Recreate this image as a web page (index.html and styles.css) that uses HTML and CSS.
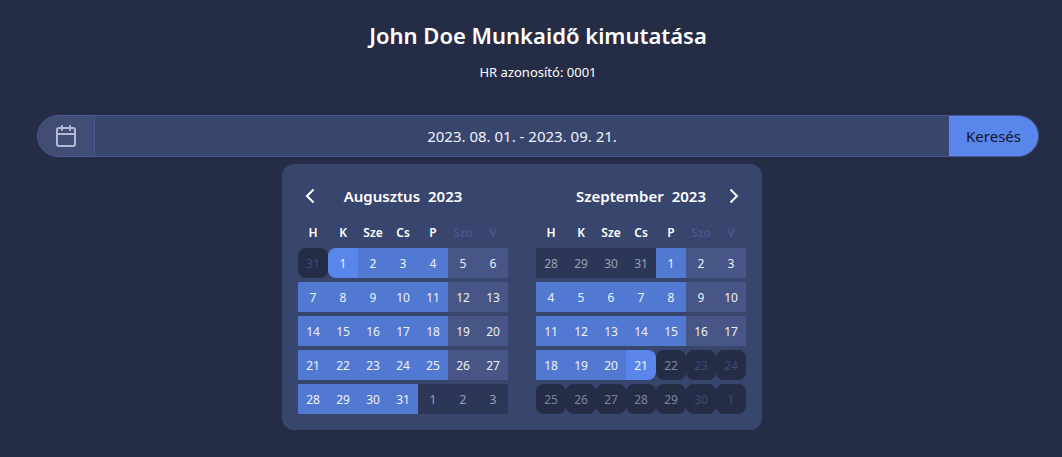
FILE: index.html
```html
<!DOCTYPE html>
<html lang="hu">
<head>
<meta charset="utf-8">
<meta name="viewport" content="width=device-width, initial-scale=1">
<title>Munkaidő kimutatás</title>
<link rel="stylesheet" href="styles.css">
</head>
<body>
<main class="page">
  <h1 class="title">John Doe Munkaidő kimutatása</h1>
  <p class="subtitle">HR azonosító: 0001</p>
  <form class="search">
    <label class="search-icon" for="range" aria-label="Időszak">
      <svg width="24" height="24" viewBox="0 0 24 24" fill="none" stroke="currentColor" stroke-width="2" stroke-linecap="round" stroke-linejoin="round"><rect x="3" y="4" width="18" height="18" rx="2"/><path d="M16 2v4M8 2v4M3 10h18"/></svg>
    </label>
    <div class="field">
      <input class="range-input" id="range" type="text" value="2023. 08. 01. - 2023. 09. 21." readonly>
      <div class="picker">
        <section class="month">
          <header class="month-head">
            <button class="nav prev" type="button" aria-label="Előző hónap"><svg width="24" height="24" viewBox="0 0 24 24" fill="none" stroke="currentColor" stroke-width="2"><path d="M15.500 5.500 9 12l6.500 6.500"/></svg></button>
            <h2 class="month-name"><span>Augusztus</span><span>2023</span></h2>
          </header>
          <table class="days" id="august"></table>
        </section>
        <section class="month">
          <header class="month-head">
            <h2 class="month-name"><span>Szeptember</span><span>2023</span></h2>
            <button class="nav next" type="button" aria-label="Következő hónap"><svg width="24" height="24" viewBox="0 0 24 24" fill="none" stroke="currentColor" stroke-width="2"><path d="M8.500 5.500 15 12l-6.500 6.500"/></svg></button>
          </header>
          <table class="days" id="september"></table>
        </section>
      </div>
    </div>
    <button class="submit" type="submit">Keresés</button>
  </form>
</main>
<script src="calendar.js"></script>
</body>
</html>
```

FILE: styles.css
```css
* { box-sizing: border-box; }

body {
  margin: 0;
  background: #252c45;
  color: #fff;
  font-family: "Noto Sans", "Open Sans", sans-serif;
}

button, input { font: inherit; }

.page {
  min-height: 100vh;
  padding: 19px 23px 27px 37px;
}

.title {
  margin: 0;
  font-size: 22px;
  line-height: 32px;
  font-weight: 600;
  text-align: center;
}

.subtitle {
  margin: 11px 0 33px;
  font-size: 13px;
  line-height: 20px;
  text-align: center;
}

.search {
  display: flex;
  height: 42px;
  border: 1px solid #485a94;
  border-radius: 21px;
  background: #38456d;
}

.search-icon {
  display: flex;
  align-items: center;
  justify-content: center;
  width: 57px;
  border-right: 1px solid #485a94;
  border-radius: 20px 0 0 20px;
  background: #414d74;
  color: #b3bbd7;
}

.field {
  position: relative;
  flex: 1;
}

.range-input {
  width: 100%;
  height: 100%;
  padding: 0;
  border: 0;
  outline: 0;
  background: transparent;
  color: #f1f3fa;
  font-size: 15px;
  text-align: center;
}

.submit {
  padding: 0 17px;
  border: 0;
  border-radius: 0 20px 20px 0;
  background: #5a86ec;
  color: #11141f;
  font-size: 15px;
}

.picker {
  position: absolute;
  top: 100%;
  left: 50%;
  transform: translateX(-50%);
  display: flex;
  gap: 28px;
  margin-top: 8px;
  padding: 16px 16px 12px;
  border-radius: 12px;
  background: #38456d;
}

.month-head {
  display: grid;
  grid-template-columns: 24px 1fr 24px;
  align-items: center;
  height: 32px;
}

.month-name {
  grid-area: 1 / 2;
  display: flex;
  justify-content: center;
  gap: 8px;
  margin: 0;
  font-size: 15px;
  font-weight: 600;
}

.nav {
  display: flex;
  padding: 0;
  border: 0;
  background: none;
  color: #fff;
}

.prev { grid-area: 1 / 1; }
.next { grid-area: 1 / 3; }

.days { border-collapse: collapse; }

.days th, .days td { padding: 0; }

.days th {
  width: 30px;
  height: 36px;
  padding-top: 4px;
  font-size: 12px;
  font-weight: 600;
}

.days .weekend { color: #47568c; }

.days td { padding-bottom: 4px; }

.day {
  display: block;
  width: 30px;
  height: 30px;
  padding: 0;
  border: 0;
  font-size: 12px;
  text-align: center;
}

.day-range { background: #5279d2; color: #eef2fc; }
.day-edge { background: #5a86ec; color: #eef2fc; }
.day-first { border-radius: 8px 0 0 8px; }
.day-last { border-radius: 0 8px 8px 0; }
.day-rest { background: #475686; color: #eef0f7; }
.day-outside { background: #2c3656; color: #9aa1b7; }
.day-off { border-radius: 8px; background: #252c45; color: #7d859f; }
.day-muted { border-radius: 8px; background: #252c45; color: #3d4a7c; }
```

FILE: calendar.js
```javascript
const names = ["H", "K", "Sze", "Cs", "P", "Szo", "V"];

const kinds = {
  r: "day-range",
  s: "day-edge day-first",
  e: "day-edge day-last",
  w: "day-rest",
  o: "day-outside",
  d: "day-off",
  m: "day-muted"
};

function fill(id, first, previousLength, length, pattern) {
  const table = document.getElementById(id);
  const head = table.createTHead().insertRow();
  names.forEach((name, i) => {
    const th = document.createElement("th");
    th.scope = "col";
    th.textContent = name;
    if (i > 4) th.className = "weekend";
    head.append(th);
  });
  const body = table.createTBody();
  let row;
  [...pattern].forEach((kind, i) => {
    if (i % 7 === 0) row = body.insertRow();
    let number = first + i;
    if (number < 1) number += previousLength;
    else if (number > length) number -= length;
    const button = document.createElement("button");
    button.type = "button";
    button.className = "day " + kinds[kind];
    button.textContent = number;
    row.insertCell().append(button);
  });
}

fill("august", 0, 31, 31, "msrrrww" + "rrrrrww" + "rrrrrww" + "rrrrrww" + "rrrrooo");
fill("september", -3, 31, 30, "oooorww" + "rrrrrww" + "rrrrrww" + "rrredmm" + "dddddmm");
```
